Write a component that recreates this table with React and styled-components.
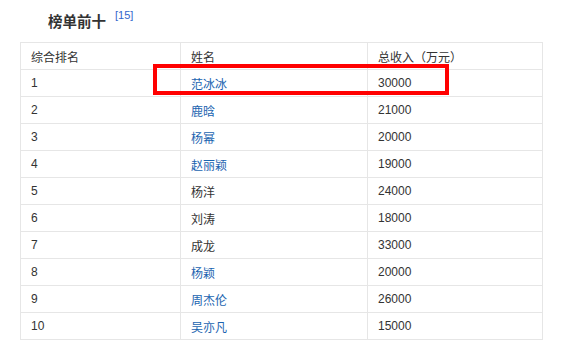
import React from 'react'
import styled, { createGlobalStyle } from 'styled-components'

const GlobalStyle = createGlobalStyle`
  html, body { margin: 0; padding: 0; background: #fff; }
  body { font-family: Arial, "Liberation Sans", "Noto Sans CJK SC", sans-serif; }
`

const rows = [
  { rank: 1, name: '范冰冰', link: true, income: 30000 },
  { rank: 2, name: '鹿晗', link: true, income: 21000 },
  { rank: 3, name: '杨幂', link: true, income: 20000 },
  { rank: 4, name: '赵丽颖', link: true, income: 19000 },
  { rank: 5, name: '杨洋', link: false, income: 24000 },
  { rank: 6, name: '刘涛', link: false, income: 18000 },
  { rank: 7, name: '成龙', link: false, income: 33000 },
  { rank: 8, name: '杨颖', link: true, income: 20000 },
  { rank: 9, name: '周杰伦', link: true, income: 26000 },
  { rank: 10, name: '吴亦凡', link: true, income: 15000 },
]

function App() {
  return (
    <Wrapper>
      <GlobalStyle />
      <Title>
        榜单前十
        <Ref>[15]</Ref>
      </Title>
      <Table>
        <colgroup>
          <col style={{ width: 160 }} />
          <col style={{ width: 187 }} />
          <col style={{ width: 175 }} />
        </colgroup>
        <thead>
          <tr>
            <Cell as="th">综合排名</Cell>
            <Cell as="th">姓名</Cell>
            <Cell as="th">总收入（万元）</Cell>
          </tr>
        </thead>
        <tbody>
          {rows.map((r) => (
            <tr key={r.rank}>
              <Cell>{r.rank}</Cell>
              <Cell>{r.link ? <Link>{r.name}</Link> : r.name}</Cell>
              <Cell>{r.income}</Cell>
            </tr>
          ))}
        </tbody>
      </Table>
      <Highlight />
    </Wrapper>
  )
}

const Wrapper = styled.div`
  position: relative;
  width: 572px;
  height: 353px;
  overflow: hidden;
`

const Title = styled.h3`
  margin: 0;
  padding: 5px 0 0 48px;
  height: 42px;
  box-sizing: border-box;
  font-family: "Noto Sans CJK SC", sans-serif;
  font-size: 14.5px;
  font-weight: bold;
  line-height: 20px;
  color: #333;
`

const Ref = styled.sup`
  margin-left: 9px;
  font-family: Arial, "Liberation Sans", sans-serif;
  font-size: 11px;
  font-weight: normal;
  color: #3366cc;
  vertical-align: 8px;
`

const Table = styled.table`
  margin-left: 20px;
  border-collapse: collapse;
  table-layout: fixed;
  width: 523px;
`

const Cell = styled.td`
  height: 27px;
  padding: 0 0 0 10px;
  border: 1px solid #e6e6e6;
  font-size: 12px;
  font-weight: normal;
  text-align: left;
  color: #333;
  font-family: Arial, "Liberation Sans", "Noto Sans CJK SC", sans-serif;
  box-sizing: border-box;
`

const Link = styled.span`
  color: #1b64b0;
`

const Highlight = styled.div`
  position: absolute;
  left: 153px;
  top: 64px;
  width: 296px;
  height: 31px;
  box-sizing: border-box;
  border: 4px solid #f00;
`

export default App
